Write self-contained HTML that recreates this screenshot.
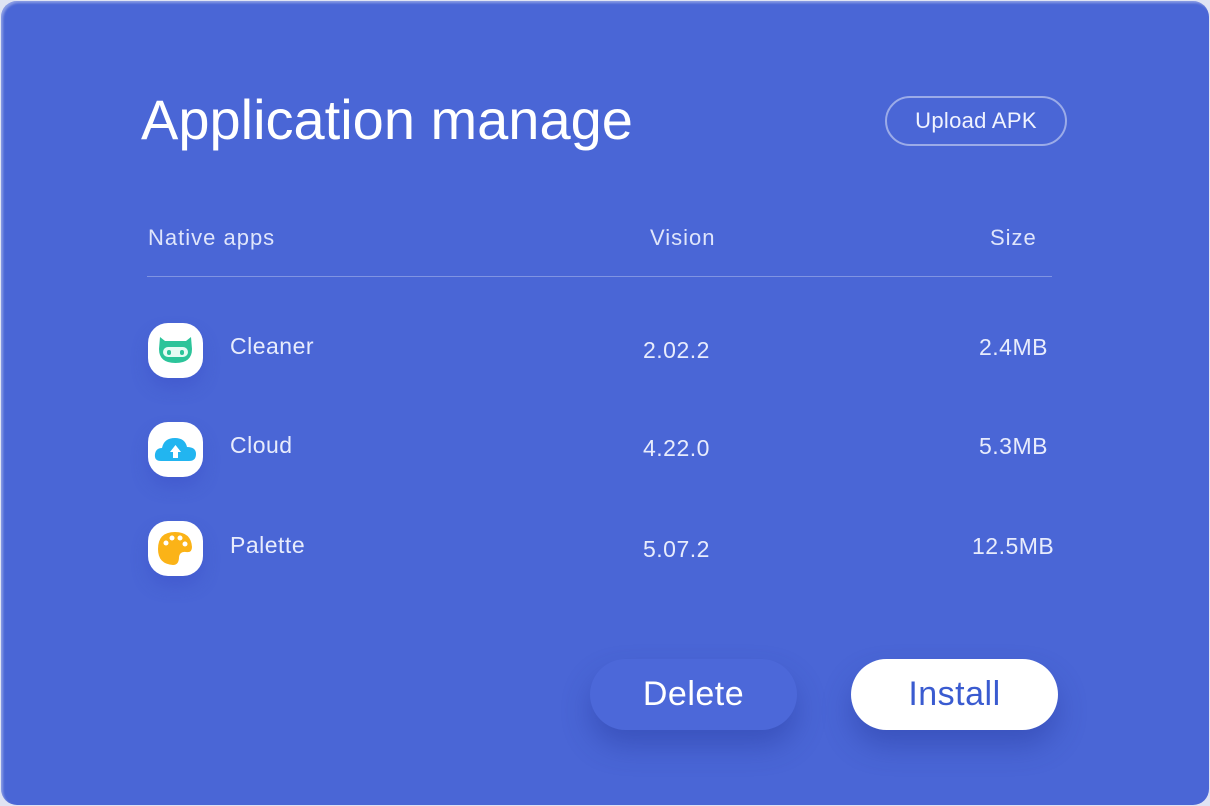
<!DOCTYPE html>
<html><head><style>
body{margin:0;width:1210px;height:806px;background:#dfe3f3;overflow:hidden;font-family:"Liberation Sans",sans-serif}
.card{position:absolute;left:1px;top:1px;width:1208px;height:804px;background:#4a66d6;border-radius:16px;box-shadow:inset 2px 2px 2px rgba(255,255,255,.35)}
.t{position:absolute;color:#fff}
.h{color:#dfe5fb;font-size:22px;letter-spacing:1px}
.r{color:#e8ecfc;font-size:23px;letter-spacing:.5px}
.ic{position:absolute;left:147px;width:55px;height:55px;border-radius:20px;background:#fff;box-shadow:0 10px 16px rgba(60,80,200,.45)}
.ic svg{position:absolute;left:0;top:0}
.btn{position:absolute;top:658px;width:207px;height:71px;border-radius:36px;font-size:34px;text-align:center;line-height:71px;letter-spacing:.5px}
</style></head><body>
<div class="card">
<div class="t" style="left:140px;top:86px;font-size:56px">Application manage</div>
<div class="t" style="left:884px;top:95px;width:178px;height:46px;border:2px solid rgba(255,255,255,.45);border-radius:26px;text-align:center;line-height:46px;font-size:22px;color:#f0f3ff;letter-spacing:.3px">Upload APK</div>
<div class="t h" style="left:147px;top:224px">Native apps</div>
<div class="t h" style="left:649px;top:224px">Vision</div>
<div class="t h" style="left:989px;top:224px">Size</div>
<div style="position:absolute;left:146px;top:275px;width:905px;height:1px;background:rgba(255,255,255,.3)"></div>

<div class="ic" style="top:322px"><svg width="55" height="55"><path d="M12 14 L17 18 H38 L43 14 L44 26 Q44 40 27.5 40 Q11 40 11 26Z" fill="#2cc49a"/><rect x="15" y="24" width="25" height="10" rx="5" fill="#e6fbf4"/><rect x="19" y="27" width="4" height="5" rx="2" fill="#2cc49a"/><rect x="32" y="27" width="4" height="5" rx="2" fill="#2cc49a"/></svg></div>
<div class="ic" style="top:421px"><svg width="55" height="55"><path d="M13 39 Q6 39 7 32 Q8 26 14 26 Q16 16 27 16 Q37 16 39 25 Q48 25 48 32 Q48 39 41 39Z" fill="#22b5f0"/><path d="M27.5 23 L33 30 H30 V36 H25 V30 H22Z" fill="#fff"/></svg></div>
<div class="ic" style="top:520px"><svg width="55" height="55"><path d="M27 11 Q43 11 44 26 Q44 32 38 31 Q32 30 31 36 Q31 44 25 44 Q10 43 10 28 Q10 11 27 11Z" fill="#fbb317"/><circle cx="18" cy="22" r="2.5" fill="#fff"/><circle cx="24" cy="17" r="2.5" fill="#fff"/><circle cx="32" cy="17" r="2.5" fill="#fff"/><circle cx="37" cy="23" r="2.5" fill="#fff"/></svg></div>

<div class="t r" style="left:229px;top:332px">Cleaner</div>
<div class="t r" style="left:229px;top:431px">Cloud</div>
<div class="t r" style="left:229px;top:531px">Palette</div>
<div class="t r" style="left:642px;top:336px">2.02.2</div>
<div class="t r" style="left:642px;top:434px">4.22.0</div>
<div class="t r" style="left:642px;top:535px">5.07.2</div>
<div class="t r" style="left:978px;top:333px">2.4MB</div>
<div class="t r" style="left:978px;top:432px">5.3MB</div>
<div class="t r" style="left:971px;top:532px">12.5MB</div>

<div class="btn" style="left:589px;background:#4c68d9;color:#fff;box-shadow:0 16px 28px rgba(40,60,160,.45)">Delete</div>
<div class="btn" style="left:850px;background:#fff;color:#3a5bd0;box-shadow:0 16px 28px rgba(40,60,160,.45)">Install</div>
</div>
</body></html>
